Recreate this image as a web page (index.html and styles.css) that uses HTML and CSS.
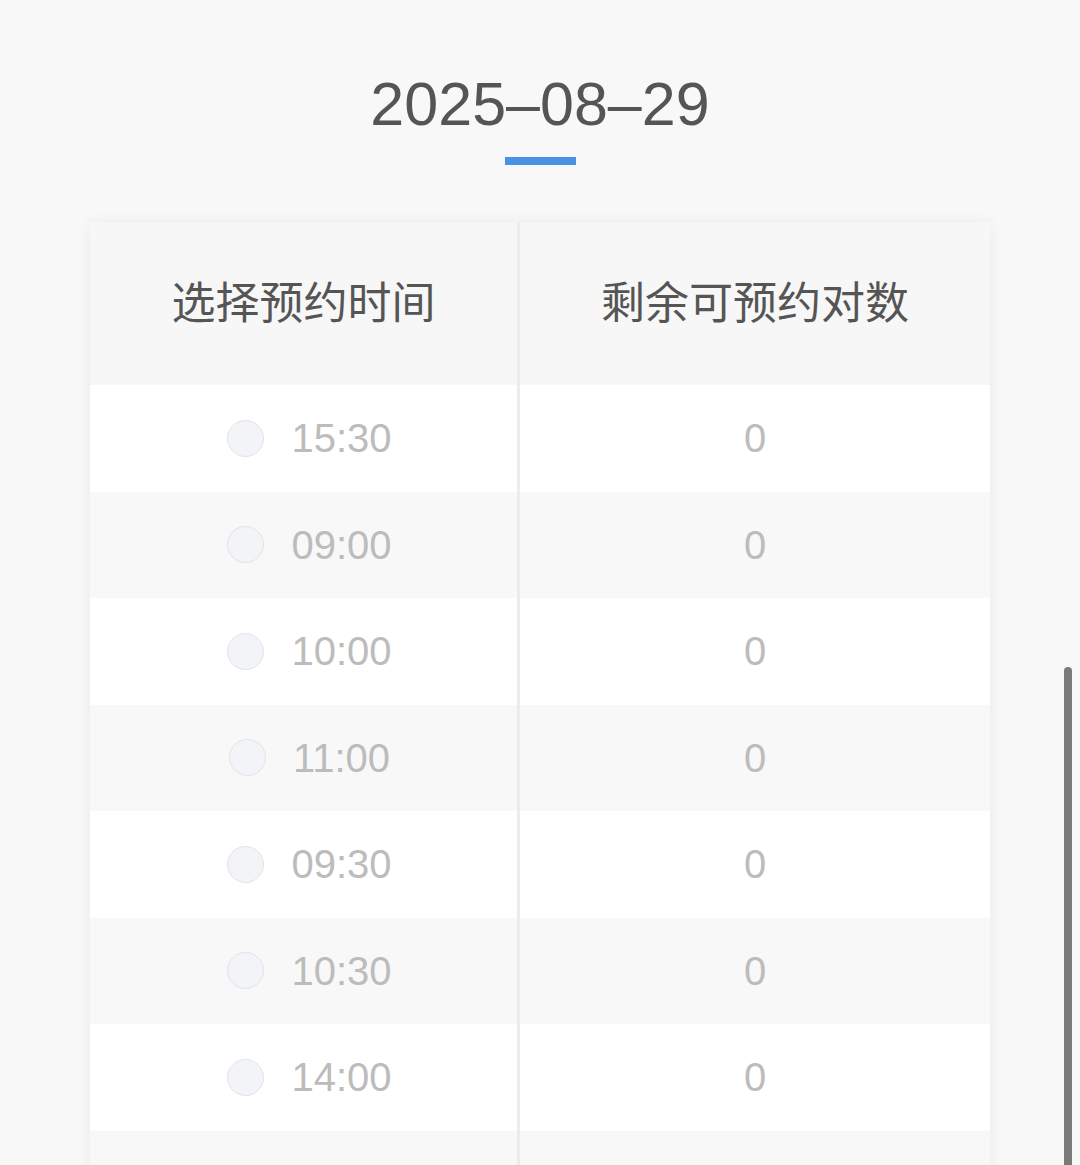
FILE: index.html
```html
<!DOCTYPE html>
<html lang="zh-CN">
<head>
<meta charset="utf-8">
<title>预约时间</title>
<link rel="stylesheet" href="styles.css">
</head>
<body>
<main class="page">
  <h1 class="date">2025–08–29</h1>
  <div class="date-bar"></div>
  <section class="table">
    <div class="row head">
      <div class="cell left">选择预约时间</div>
      <div class="cell right">剩余可预约对数</div>
    </div>
    <div class="row odd">
      <div class="cell left"><span class="radio"></span><span class="time">15:30</span></div>
      <div class="cell right"><span class="num">0</span></div>
    </div>
    <div class="row even">
      <div class="cell left"><span class="radio"></span><span class="time">09:00</span></div>
      <div class="cell right"><span class="num">0</span></div>
    </div>
    <div class="row odd">
      <div class="cell left"><span class="radio"></span><span class="time">10:00</span></div>
      <div class="cell right"><span class="num">0</span></div>
    </div>
    <div class="row even">
      <div class="cell left"><span class="radio"></span><span class="time">11:00</span></div>
      <div class="cell right"><span class="num">0</span></div>
    </div>
    <div class="row odd">
      <div class="cell left"><span class="radio"></span><span class="time">09:30</span></div>
      <div class="cell right"><span class="num">0</span></div>
    </div>
    <div class="row even">
      <div class="cell left"><span class="radio"></span><span class="time">10:30</span></div>
      <div class="cell right"><span class="num">0</span></div>
    </div>
    <div class="row odd">
      <div class="cell left"><span class="radio"></span><span class="time">14:00</span></div>
      <div class="cell right"><span class="num">0</span></div>
    </div>
    <div class="row even">
      <div class="cell left"></div>
      <div class="cell right"></div>
    </div>
  </section>
</main>
<div class="scrollbar"></div>
</body>
</html>
```

FILE: styles.css
```css
html, body {
  margin: 0;
  padding: 0;
  height: 100%;
  overflow: hidden;
  background: #f8f8f8;
}

body {
  font-family: "Liberation Sans", "Noto Sans CJK SC", sans-serif;
  color: #555;
}

.page {
  display: flex;
  flex-direction: column;
  align-items: center;
  padding-top: 74px;
}

.date {
  margin: 0;
  font-size: 61px;
  line-height: 61px;
  font-weight: 400;
  color: #555;
  letter-spacing: 0;
}

.date-bar {
  width: 71px;
  height: 8px;
  margin-top: 22px;
  background: #4a92e4;
}

.table {
  margin-top: 57px;
  width: 900px;
  background: #fff;
  box-shadow: 0 0 14px rgba(0, 0, 0, 0.06);
}

.row {
  display: flex;
  height: 106.5px;
}

.row.head {
  height: 163px;
  background: #f7f7f7;
}

.row.odd { background: #fff; }
.row.even { background: #f8f8f8; }

.cell {
  display: flex;
  align-items: center;
  justify-content: center;
}

.cell.left {
  width: 430px;
  padding-left: 12px;
  box-sizing: border-box;
  border-right: 3px solid #ececec;
}

.cell.right {
  flex: 1;
}

.head .cell {
  font-family: "Noto Sans CJK SC", sans-serif;
  font-size: 44px;
  color: #555;
  padding-bottom: 8px;
  box-sizing: border-box;
}

.head .cell.left {
  padding-left: 0;
}

.radio {
  width: 35px;
  height: 35px;
  border-radius: 50%;
  border: 1.5px solid #e1e3e7;
  background: #f2f4f8;
  margin-right: 27px;
  flex: none;
}

.time,
.num {
  font-size: 40px;
  line-height: 1;
  color: #bcbcbc;
}

.scrollbar {
  position: fixed;
  right: 8px;
  top: 667px;
  width: 8px;
  height: 520px;
  border-radius: 4px;
  background: #7a7a7a;
}
```
